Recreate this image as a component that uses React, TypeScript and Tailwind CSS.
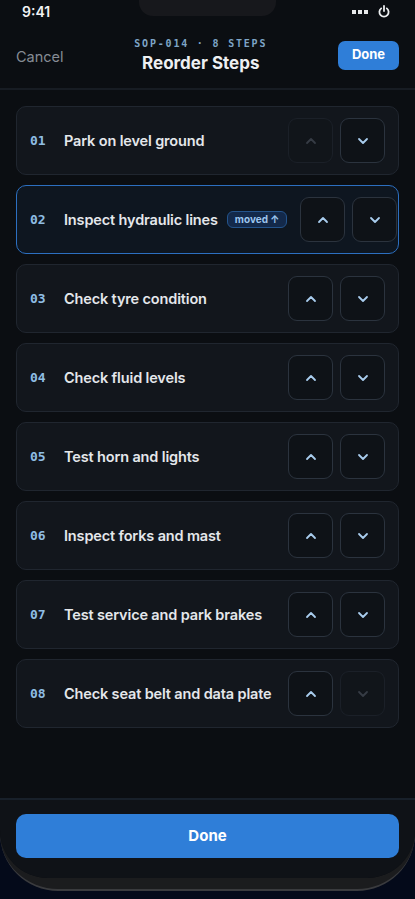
import React from 'react';

interface Step {
  id: string;
  title: string;
  moved?: boolean;
}

const steps: Step[] = [
  { id: '01', title: 'Park on level ground' },
  { id: '02', title: 'Inspect hydraulic lines', moved: true },
  { id: '03', title: 'Check tyre condition' },
  { id: '04', title: 'Check fluid levels' },
  { id: '05', title: 'Test horn and lights' },
  { id: '06', title: 'Inspect forks and mast' },
  { id: '07', title: 'Test service and park brakes' },
  { id: '08', title: 'Check seat belt and data plate' },
];

const Chevron: React.FC<{ up?: boolean; muted?: boolean }> = ({ up, muted }) => (
  <svg width="12" height="12" viewBox="0 0 12 12" fill="none">
    <polyline
      points={up ? '2,8 6,4 10,8' : '2,4 6,8 10,4'}
      stroke={muted ? '#363c45' : '#a9cdee'}
      strokeWidth="1.8"
      strokeLinecap="round"
      strokeLinejoin="round"
    />
  </svg>
);

const MoveButton: React.FC<{ up?: boolean; disabled?: boolean }> = ({ up, disabled }) => (
  <button
    className={
      disabled
        ? 'w-[45px] h-[45px] shrink-0 flex items-center justify-center rounded-[9px] border border-[#1b2028] bg-[#11151a]'
        : 'w-[45px] h-[45px] shrink-0 flex items-center justify-center rounded-[9px] border border-[#2b333e] bg-[#0e1217]'
    }
  >
    <Chevron up={up} muted={disabled} />
  </button>
);

const StepCard: React.FC<{ step: Step; first: boolean; last: boolean }> = ({ step, first, last }) => (
  <div
    className={
      step.moved
        ? 'flex items-center h-[69px] px-[13px] rounded-[10px] border border-[#2c6fc0] bg-[#0e1620]'
        : 'flex items-center h-[69px] px-[13px] rounded-[10px] border border-[#20262f] bg-[#12161c]'
    }
  >
    <span className="w-[34px] shrink-0 text-[13px] font-bold text-[#8fbde3] font-['DejaVu_Sans_Mono',monospace]">
      {step.id}
    </span>
    <span className="whitespace-nowrap text-[14.5px] tracking-[-0.01em] font-semibold text-[#e4e7eb]">
      {step.title}
    </span>
    {step.moved && (
      <span className="ml-[9px] shrink-0 h-[17px] px-[7px] flex items-center rounded-[6px] border border-[#24548c] bg-[#13294a] text-[10px] font-bold text-[#9cc6ef]">
        moved ↑
      </span>
    )}
    <div className="ml-auto pl-[13px] flex gap-[7px] shrink-0">
      <MoveButton up disabled={first} />
      <MoveButton disabled={last} />
    </div>
  </div>
);

export default function App() {
  return (
    <div className="h-[899px] w-[415px] bg-[#040a1a] font-['Inter',sans-serif] overflow-hidden">
      <div className="h-[891px] bg-[#1b1c1e] rounded-b-[58px] border-b-2 border-[#3a3b3e] pb-[11px]">
        <div className="h-full bg-[#0b0e12] rounded-b-[48px] overflow-hidden flex flex-col relative">
          {/* notch */}
          <div className="absolute left-[139px] top-0 w-[137px] h-[16px] bg-[#17181c] rounded-b-[14px]" />

          {/* status bar */}
          <div className="h-[22px] flex items-center justify-between pl-[22px] pr-[25px] pt-[1px]">
            <span className="text-[14px] font-semibold text-[#f1f2f4]">9:41</span>
            <div className="flex items-center gap-[10px]">
              <div className="flex gap-[2px]">
                <span className="w-[4px] h-[4px] bg-[#e8e9eb]" />
                <span className="w-[4px] h-[4px] bg-[#e8e9eb]" />
                <span className="w-[4px] h-[4px] bg-[#e8e9eb]" />
              </div>
              <svg width="12" height="13" viewBox="0 0 12 13" fill="none">
                <path d="M3.2 3.4a4.6 4.6 0 1 0 5.6 0" stroke="#eceef0" strokeWidth="1.8" strokeLinecap="round" />
                <line x1="6" y1="1" x2="6" y2="6" stroke="#eceef0" strokeWidth="1.8" strokeLinecap="round" />
              </svg>
            </div>
          </div>

          {/* header */}
          <div className="h-[68px] flex justify-between items-center px-4 border-b-2 border-[#171c23]">
            <span className="text-[14.5px] text-[#868c95] pt-[3px]">Cancel</span>
            <div className="flex flex-col items-center">
              <span className="text-[10px] tracking-[0.18em] text-[#7ea5c7] font-bold font-['DejaVu_Sans_Mono',monospace]">
                SOP-014 · 8 STEPS
              </span>
              <span className="text-[17px] font-bold text-[#eef0f2] leading-[24px]">Reorder Steps</span>
            </div>
            <button className="w-[61px] h-[29px] rounded-[7px] bg-[#2f7ed8] text-[13px] font-bold text-white">
              Done
            </button>
          </div>

          {/* list */}
          <div className="flex-1 px-4 pt-4 flex flex-col gap-[10px]">
            {steps.map((s, i) => (
              <StepCard key={s.id} step={s} first={i === 0} last={i === steps.length - 1} />
            ))}
          </div>

          {/* footer */}
          <div className="h-[80px] border-t-2 border-[#18202a] bg-[#0f1217] px-4 pt-[14px]">
            <button className="w-full h-[44px] rounded-[10px] bg-[#2f7ed8] text-[15px] font-bold text-white">
              Done
            </button>
          </div>
        </div>
      </div>
    </div>
  );
}
